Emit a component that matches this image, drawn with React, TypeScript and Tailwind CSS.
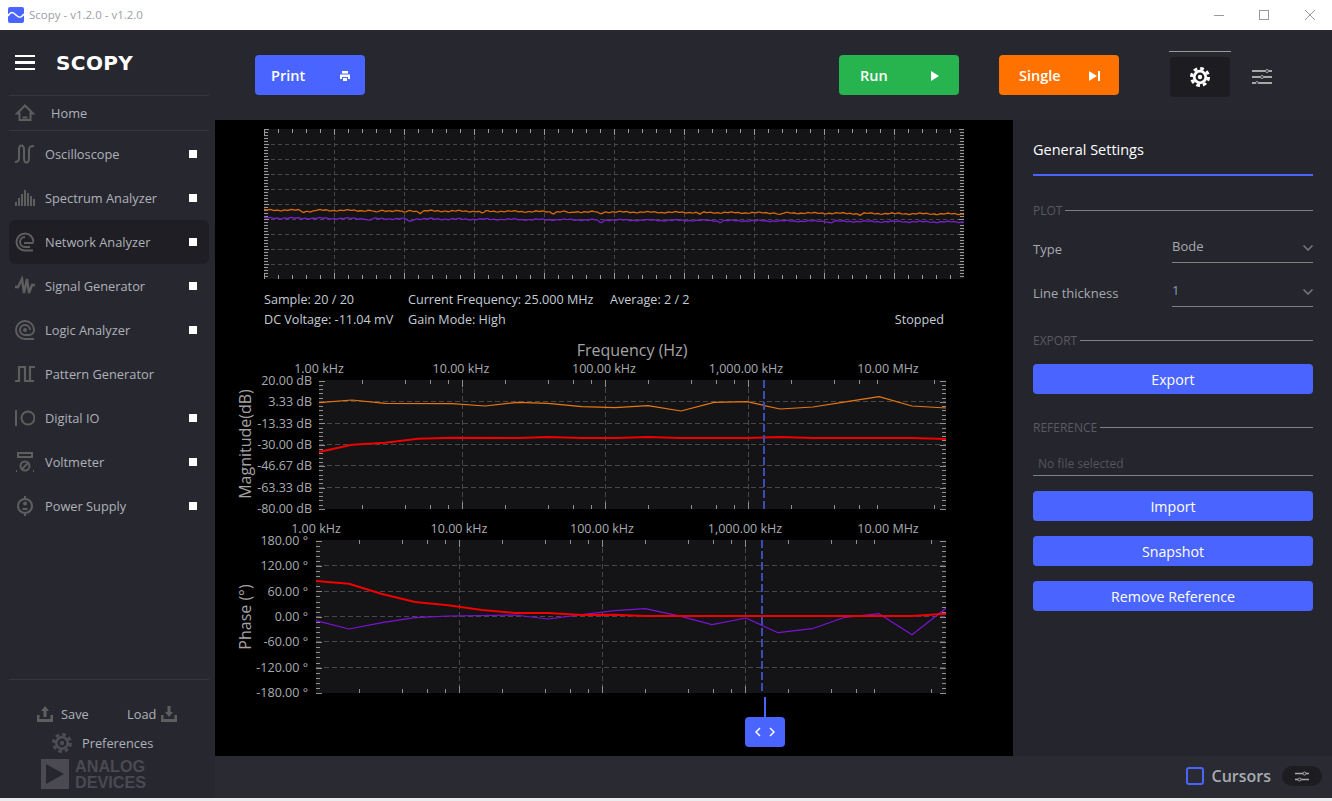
const navItems = [
  { name: "Oscilloscope", icon: "scope", dot: true },
  { name: "Spectrum Analyzer", icon: "spectrum", dot: true },
  { name: "Network Analyzer", icon: "network", dot: true, active: true },
  { name: "Signal Generator", icon: "signal", dot: true },
  { name: "Logic Analyzer", icon: "logic", dot: true },
  { name: "Pattern Generator", icon: "pattern", dot: false },
  { name: "Digital IO", icon: "io", dot: true },
  { name: "Voltmeter", icon: "volt", dot: true },
  { name: "Power Supply", icon: "power", dot: true },
];

function NavIcon({ name }: { name: string }) {
  const stroke = "#5e5e5e";
  return (
    <svg width="20" height="20" viewBox="0 0 20 20" fill="none" stroke={stroke} strokeWidth="2" className="shrink-0">
      {name === "scope" && <path d="M0 18C3 18 4 17 4 14V6C4 0 9 0 9 6V14C9 20 14 20 14 14V6C14 3 15 2 19 2" />}
      {name === "spectrum" &&
        [[1, 4], [4, 8], [7, 12], [10, 16], [13, 13], [16, 10], [19, 7]].map(([x, h]) => (
          <line key={x} x1={x} x2={x} y1={18} y2={18 - h} />
        ))}
      {name === "network" && (
        <>
          <path d="M18 18.5H10A8.5 8.5 0 1 1 18.5 10" />
          <path d="M18.5 11H9" />
          <path d="M15 15H10A5 5 0 0 1 10 5" />
        </>
      )}
      {name === "signal" && <path d="M0 11H3L7 3L9 17L12 3L14 17L17 9H20" strokeWidth="2.4" />}
      {name === "logic" && (
        <>
          <path d="M19 19H10A9 9 0 1 1 19 10A5 5 0 0 1 14 15H10A5 5 0 1 1 15 10" />
          <circle cx="10" cy="10" r="1" />
        </>
      )}
      {name === "pattern" && <path d="M0 17H4V3H10V17H15V3H20M15 17H19" strokeWidth="2.2" />}
      {name === "io" && (
        <>
          <line x1="1" x2="1" y1="2" y2="18" />
          <circle cx="13" cy="10" r="6.5" />
        </>
      )}
      {name === "volt" && (
        <>
          <rect x="3" y="1" width="14" height="4" />
          <circle cx="10" cy="14" r="4.5" />
          <path d="M7 17L13 11" />
          <path d="M1 19H2M18 19H19" />
        </>
      )}
      {name === "power" && (
        <>
          <circle cx="10" cy="10" r="7" />
          <path d="M10 0V3M10 17V20M7.5 13H12.5" />
          <circle cx="10" cy="7.5" r="1" fill={stroke} />
        </>
      )}
    </svg>
  );
}

function Gear({ size, color, hole }: { size: number; color: string; hole: string }) {
  return (
    <svg width={size} height={size} viewBox="0 0 20 20" className="shrink-0">
      <circle cx="10" cy="10" r="8.5" fill="none" stroke={color} strokeWidth="3" strokeDasharray="3.67 3" />
      <circle cx="10" cy="10" r="7.2" fill={color} />
      <circle cx="10" cy="10" r="4.4" fill={hole} />
      <circle cx="10" cy="10" r="2.2" fill={color} />
    </svg>
  );
}

function Sidebar() {
  return (
    <aside className="w-[215px] shrink-0 flex flex-col bg-[#272730]">
      <div className="h-[65px] flex items-start pt-[25px] pl-[15px]">
        <div className="w-[20px] flex flex-col gap-[4px]">
          <div className="h-[2px] bg-white" />
          <div className="h-[3px] bg-white" />
          <div className="h-[2px] bg-white" />
        </div>
        <span className="ml-[21px] -mt-[4px] text-[20px] leading-[24px] tracking-[0.4px] font-bold text-white font-['DejaVu_Sans',sans-serif]">
          SCOPY
        </span>
      </div>
      <div className="ml-[9px] mr-[6px] border-y border-[#36363f] h-[36px] flex items-center pl-[6px]">
        <svg width="20" height="18" viewBox="0 0 20 18" fill="none" stroke="#5e5e5e" strokeWidth="2" className="shrink-0">
          <path d="M10 1.5L18 9.5H15.5V16H4.5V9.5H2Z" />
          <path d="M7.5 13.5H12.5" />
        </svg>
        <span className="ml-[16px] pt-[2px] text-[12.8px] text-[#aeb2b8]">Home</span>
      </div>
      <nav className="mt-[1px] flex flex-col">
        {navItems.map((item) => (
          <div
            key={item.name}
            className={`ml-[9px] mr-[6px] h-[44px] flex items-center pl-[6px] pr-[12px] rounded-[6px] ${item.active ? "bg-[#1e1e24]" : ""}`}
          >
            <NavIcon name={item.icon} />
            <span className="ml-[10px] pt-[2px] flex-1 text-[12.8px] text-[#aeb2b8]">{item.name}</span>
            {item.dot && <div className="w-[8px] h-[8px] bg-white" />}
          </div>
        ))}
      </nav>
      <div className="mt-auto ml-[9px] mr-[6px] border-t border-[#36363f] h-px" />
      <div className="pt-[24px] pb-[9px]">
        <div className="h-[20px] flex items-center pl-[37px] text-[12.8px] text-[#aeb2b8]">
          <svg width="16" height="16" viewBox="0 0 16 16" fill="#5e5e5e" className="shrink-0">
            <path d="M0 9H2.5V13H13.5V9H16V16H0ZM8 0L12 5H9.5V11H6.5V5H4Z" />
          </svg>
          <span className="ml-[8px] w-[66px] pt-[2px]">Save</span>
          <span className="w-[34px] pt-[2px]">Load</span>
          <svg width="16" height="16" viewBox="0 0 16 16" fill="#5e5e5e" className="shrink-0">
            <path d="M0 9H2.5V13H13.5V9H16V16H0ZM6.5 0H9.5V6H12L8 11L4 6H6.5Z" />
          </svg>
        </div>
        <div className="mt-[9px] h-[20px] flex items-center pl-[52px]">
          <Gear size={20} color="#4c4c52" hole="#272730" />
          <span className="ml-[10px] pt-[2px] text-[12.8px] text-[#aeb2b8]">Preferences</span>
        </div>
        <div className="mt-[6px] h-[30px] flex items-center pl-[41px]">
          <svg width="28" height="30" viewBox="0 0 28 30" className="shrink-0">
            <rect width="28" height="30" fill="#4a4a50" />
            <path d="M5 5L23 15L5 25Z" fill="#272730" />
          </svg>
          <div className="ml-[6px] text-[#4a4a50] font-['Liberation_Sans',sans-serif] font-bold text-[16.2px] leading-[16px]">
            <div>ANALOG</div>
            <div>DEVICES</div>
          </div>
        </div>
      </div>
    </aside>
  );
}

function TopBar() {
  return (
    <header className="h-[90px] shrink-0 bg-[#272730] flex items-start pt-[25px] pl-[40px] text-white text-[14.5px] font-semibold">
      <button className="w-[110px] h-[40px] pt-[1px] rounded-[4px] bg-[#4a65ff] flex items-center justify-between pl-[16px] pr-[15px]">
        Print
        <svg width="10" height="10" viewBox="0 0 10 10" fill="white">
          <path d="M2 0H8V2.5H2ZM0 3.5H10V8H8V6H2V8H0ZM3 7H7V10H3Z" />
        </svg>
      </button>
      <button className="ml-[474px] w-[120px] h-[40px] pt-[1px] rounded-[4px] bg-[#27b34e] flex items-center justify-between pl-[21px] pr-[20px]">
        Run
        <svg width="8" height="10" viewBox="0 0 8 10" fill="white">
          <path d="M0 0L8 5L0 10Z" />
        </svg>
      </button>
      <button className="ml-[40px] w-[120px] h-[40px] pt-[1px] rounded-[4px] bg-[#ff7200] flex items-center justify-between pl-[20px] pr-[19px]">
        Single
        <svg width="11" height="10" viewBox="0 0 11 10" fill="white">
          <path d="M0 0L8 5L0 10ZM9 0H11V10H9Z" />
        </svg>
      </button>
      <div className="ml-[50px] -mt-[4px] w-[62px] border-t border-[#9a9a9a] pt-[5px]">
        <div className="mx-auto w-[60px] h-[40px] rounded-[4px] bg-[#1c1c21] flex items-center justify-center">
          <Gear size={20} color="#ffffff" hole="#1c1c21" />
        </div>
      </div>
      <div className="ml-[21px] mt-[14px]">
        <SlidersIcon color="#a8a8a8" width={20} />
      </div>
    </header>
  );
}

function SlidersIcon({ color, width }: { color: string; width: number }) {
  return (
    <svg width={width} height={width * 0.75} viewBox="0 0 20 15" stroke={color} strokeWidth="2" fill="#272730">
      <path d="M0 2H20M0 8H20M0 14H20" />
      <circle cx="15" cy="2" r="1.5" strokeWidth="1" />
      <circle cx="10" cy="8" r="1.5" strokeWidth="1" />
      <circle cx="5" cy="14" r="1.5" strokeWidth="1" />
    </svg>
  );
}

const pts = (list: number[][]) => list.map((p) => p.join(",")).join(" ");

// sweep trace of the small plot, built from a few fixed waves and dips
function sweep(base: number, drift: number, dips: number[][]) {
  const out: number[][] = [];
  for (let x = 264; x <= 964; x += 2) {
    let y = base + (drift * (x - 264)) / 700 + Math.sin(x * 0.9) * 0.45 + Math.sin(x * 0.23) * 0.45;
    for (const [dx, depth] of dips) {
      y += depth * Math.exp(-((x - dx) * (x - dx)) / 6);
    }
    out.push([x, +y.toFixed(2)]);
  }
  return pts(out);
}

function SweepPlot() {
  const hLines = [144, 159, 174, 189, 204, 219, 234, 249, 264];
  const vLines = [334, 404, 474, 544, 614, 684, 754, 824, 894];
  const xTicks = Array.from({ length: 51 }, (_, i) => 264 + i * 14);
  const yTicks = Array.from({ length: 51 }, (_, i) => 129 + i * 3);
  return (
    <svg width="700" height="150" viewBox="264 129 700 150" className="block">
      <rect x="264" y="129" width="700" height="150" fill="#141417" />
      {hLines.map((y) => (
        <line key={y} x1="264" x2="964" y1={y + 0.5} y2={y + 0.5} stroke="#484848" strokeDasharray="4 3" />
      ))}
      {vLines.map((x) => (
        <line key={x} x1={x + 0.5} x2={x + 0.5} y1="129" y2="279" stroke="#484848" strokeDasharray="4 3" />
      ))}
      {xTicks.map((x, i) => {
        const len = i % 5 === 0 ? 6 : 4;
        return (
          <g key={x} stroke="#9a9a9a">
            <line x1={x + 0.5} x2={x + 0.5} y1="129" y2={129 + len} />
            <line x1={x + 0.5} x2={x + 0.5} y1="279" y2={279 - len} />
          </g>
        );
      })}
      {yTicks.map((y, i) => {
        const len = i % 5 === 0 ? 5 : 4;
        return (
          <g key={y} stroke="#9a9a9a">
            <line x1="264" x2={264 + len} y1={y + 0.5} y2={y + 0.5} />
            <line x1="964" x2={964 - len} y1={y + 0.5} y2={y + 0.5} />
          </g>
        );
      })}
      <polyline
        points={sweep(210, 4, [[304, 2], [311, 1.5], [376, 2], [404, 2], [420, 2], [482, 2], [553, 1.5], [570, 1.5], [600, 2], [700, 1.5], [780, 2], [860, 1.5]])}
        fill="none"
        stroke="#d9680f"
        strokeWidth="1.3"
      />
      <polyline
        points={sweep(218, 4, [[369, 2], [410, 3], [600, 1.5], [601, 1.5], [720, 1.5], [830, 1.5]])}
        fill="none"
        stroke="#7a1fd0"
        strokeWidth="1.3"
      />
    </svg>
  );
}

type BodeProps = {
  top: number;
  x0: number;
  y0: number;
  y1: number;
  labelX: number;
  yLabels: [string, number][];
  xCenters: number[];
  yTitle: string;
  yTitleAt: number;
  cursorX: number;
  lines: { points: number[][]; color: string; width: number }[];
  height: number;
  showFreq?: boolean;
};

const xNames = ["1.00 kHz", "10.00 kHz", "100.00 kHz", "1,000.00 kHz", "10.00 MHz"];
const decade = 143;

function BodePlot({ top, x0, y0, y1, labelX, yLabels, xCenters, yTitle, yTitleAt, cursorX, lines, height, showFreq }: BodeProps) {
  const x1 = 946;
  const majors = [x0 + decade, x0 + decade * 2, x0 + decade * 3];
  const minors: number[] = [];
  for (let d = 0; d < 4; d++) {
    for (const m of [0.301, 0.602, 0.778, 0.903]) {
      minors.push(Math.round(x0 + decade * d + decade * m));
    }
  }
  minors.push(Math.round(x0 + decade * 4 + decade * 0.301));
  const step = (yLabels[yLabels.length - 1][1] - yLabels[0][1]) / 30;
  const yTicks = Array.from({ length: 31 }, (_, i) => y0 + 0.5 + i * step);
  return (
    <svg width="798" height={height} viewBox={`215 ${top} 798 ${height}`} className="block overflow-visible" fontSize="12.5">
      <rect x={x0} y={y0} width={x1 - x0} height={y1 - y0} fill="#141417" />
      {yLabels.slice(1, -1).map(([, y]) => (
        <line key={y} x1={x0} x2={x1} y1={y} y2={y} stroke="#484848" strokeDasharray="5 3" />
      ))}
      {majors.map((x) => (
        <line key={x} x1={x + 0.5} x2={x + 0.5} y1={y0} y2={y1} stroke="#484848" strokeDasharray="5 3" />
      ))}
      {majors.map((x) => (
        <g key={x} stroke="#8f8f8f">
          <line x1={x + 0.5} x2={x + 0.5} y1={y0} y2={y0 + 7} />
          <line x1={x + 0.5} x2={x + 0.5} y1={y1} y2={y1 - 7} />
        </g>
      ))}
      {minors.map((x) => (
        <g key={x} stroke="#8f8f8f">
          <line x1={x + 0.5} x2={x + 0.5} y1={y0} y2={y0 + 4} />
          <line x1={x + 0.5} x2={x + 0.5} y1={y1} y2={y1 - 4} />
        </g>
      ))}
      {yTicks.map((y, i) => {
        const len = i % 5 === 0 ? 6 : 4;
        return (
          <g key={i} stroke="#8f8f8f">
            <line x1={x0} x2={x0 + len} y1={Math.round(y) + 0.5} y2={Math.round(y) + 0.5} />
            <line x1={x1} x2={x1 - len} y1={Math.round(y) + 0.5} y2={Math.round(y) + 0.5} />
          </g>
        );
      })}
      {lines.map((l) => (
        <polyline key={l.color} points={pts(l.points)} fill="none" stroke={l.color} strokeWidth={l.width} strokeLinejoin="round" />
      ))}
      <line x1={cursorX} x2={cursorX} y1={y0} y2={y1} stroke="#3a4cb8" strokeWidth="2" strokeDasharray="8 3" />
      {showFreq && (
        <text x="632" y="356" textAnchor="middle" fontSize="16" fill="#a4a4a4">
          Frequency (Hz)
        </text>
      )}
      {xCenters.map((x, i) => (
        <text key={x} x={x} y={y0 - 7} textAnchor="middle" fill="#a8acb0">
          {xNames[i]}
        </text>
      ))}
      {yLabels.map(([label, y]) => (
        <text key={label} x={labelX} y={y + 4.5} textAnchor="end" fill="#a8acb0">
          {label}
        </text>
      ))}
      <text
        transform={`translate(251 ${yTitleAt}) rotate(-90)`}
        textAnchor="middle"
        fontSize="16"
        fill="#a4a4a4"
      >
        {yTitle}
      </text>
    </svg>
  );
}

const magOrange = [[319, 402.7], [352, 400], [385, 403.3], [452, 403.7], [485, 406], [518, 402.3], [548, 403.3], [582, 406.7], [615, 407.7], [648, 405.7], [681, 411], [714, 402.3], [747, 401.7], [780, 409], [813, 407], [847, 401.7], [879, 396.7], [912, 406], [946, 408]];
const magRed = [[319, 452], [352, 444.7], [385, 442.7], [418, 438.7], [452, 437.7], [518, 438], [548, 437], [582, 438], [615, 438], [648, 437], [681, 438], [747, 438], [780, 437], [813, 438], [912, 438], [946, 439]];
const phaseRed = [[316, 581], [349, 583.7], [382, 594], [415, 602], [448, 605.3], [482, 610], [515, 613], [548, 613], [582, 615], [615, 614.7], [645, 616], [745, 616], [912, 616], [946, 613.7]];
const phasePurple = [[316, 620.7], [349, 629], [382, 622.7], [415, 617.7], [448, 616], [515, 615], [548, 619], [582, 614.7], [615, 610.7], [645, 608.7], [678, 615.7], [712, 624.7], [746, 618], [778, 632.7], [812, 628.7], [845, 617.3], [879, 613.7], [912, 634.7], [946, 608.3]];

function PlotArea() {
  return (
    <main className="w-[798px] shrink-0 bg-black flex flex-col pt-[9px]">
      <div className="pl-[49px]">
        <SweepPlot />
      </div>
      <div className="mt-[11px] pl-[49px] pr-[69px] text-[12.6px] leading-[20px] text-[#c4ccd4]">
        <div className="flex">
          <span className="w-[144px]">Sample: 20 / 20</span>
          <span className="w-[202px]">Current Frequency: 25.000 MHz</span>
          <span>Average: 2 / 2</span>
        </div>
        <div className="flex">
          <span className="w-[144px]">DC Voltage: -11.04 mV</span>
          <span>Gain Mode: High</span>
          <span className="ml-auto">Stopped</span>
        </div>
      </div>
      <div className="mt-[10px]">
        <BodePlot
          top={340}
          height={180}
          x0={319}
          y0={380}
          y1={509}
          labelX={312}
          showFreq
          xCenters={[319, 461, 604, 746, 888]}
          yLabels={[["20.00 dB", 380], ["3.33 dB", 401.5], ["-13.33 dB", 423.5], ["-30.00 dB", 444.5], ["-46.67 dB", 465.5], ["-63.33 dB", 487.5], ["-80.00 dB", 508.5]]}
          yTitle="Magnitude(dB)"
          yTitleAt={444}
          cursorX={764}
          lines={[
            { points: magOrange, color: "#e8760e", width: 1.2 },
            { points: magRed, color: "#f00000", width: 2 },
          ]}
        />
        <BodePlot
          top={520}
          height={177}
          x0={316}
          y0={540}
          y1={693}
          labelX={308}
          xCenters={[316, 459, 602, 745, 888]}
          yLabels={[["180.00 °", 540], ["120.00 °", 565.5], ["60.00 °", 591.5], ["0.00 °", 616.5], ["-60.00 °", 641.5], ["-120.00 °", 667.5], ["-180.00 °", 692.5]]}
          yTitle="Phase (°)"
          yTitleAt={617}
          cursorX={762}
          lines={[
            { points: phasePurple, color: "#7d12d6", width: 1.2 },
            { points: phaseRed, color: "#f00000", width: 2 },
          ]}
        />
      </div>
      <div className="ml-[530px] w-[40px] flex flex-col items-center">
        <div className="w-[2px] h-[20px] bg-[#4a65ff]" />
        <div className="w-[40px] h-[30px] rounded-[4px] bg-[#4a65ff] flex items-center justify-center">
          <svg width="20" height="10" viewBox="0 0 20 10" fill="none" stroke="white" strokeWidth="1.5">
            <path d="M5 1L1 5L5 9M15 1L19 5L15 9" />
          </svg>
        </div>
      </div>
    </main>
  );
}

function SectionLabel({ label, className }: { label: string; className: string }) {
  return (
    <div className={`h-[16px] flex items-center text-[12px] text-[#5a5a62] ${className}`}>
      <span className="pt-[2px]">{label}</span>
      <div className="ml-[3px] mt-[1px] flex-1 h-px bg-[#808080]" />
    </div>
  );
}

function SelectRow({ label, value, className, valueClass }: { label: string; value: string; className: string; valueClass: string }) {
  return (
    <div className={`flex h-[30px] text-[13px] ${className}`}>
      <span className="w-[139px] pt-[6px] leading-[20px] text-[#a6aab0]">{label}</span>
      <div className="flex-1 border-b border-[#808080] flex justify-between">
        <span className={`pt-[3px] leading-[20px] ${valueClass}`}>{value}</span>
        <svg width="10" height="6" viewBox="0 0 10 6" fill="none" stroke="#77777c" strokeWidth="1.5" className="mt-[12px]">
          <path d="M0.5 0.5L5 5L9.5 0.5" />
        </svg>
      </div>
    </div>
  );
}

function BlueButton({ label, className }: { label: string; className: string }) {
  return (
    <button className={`block w-full h-[30px] pt-[2px] rounded-[4px] bg-[#4a65ff] text-white text-[14.2px] ${className}`}>{label}</button>
  );
}

function SettingsPanel() {
  return (
    <section className="w-[319px] shrink-0 bg-[#25252d] pl-[20px] pr-[19px]">
      <div className="h-[56px] border-b-2 border-[#4a65ff] flex items-center pt-[6px] text-[14.5px] text-white">General Settings</div>
      <SectionLabel label="PLOT" className="mt-[26px]" />
      <SelectRow label="Type" value="Bode" className="mt-[15px]" valueClass="text-[#a6aab0]" />
      <SelectRow label="Line thickness" value="1" className="mt-[14px]" valueClass="text-[#8a9ab0]" />
      <SectionLabel label="EXPORT" className="mt-[25px]" />
      <BlueButton label="Export" className="mt-[16px]" />
      <SectionLabel label="REFERENCE" className="mt-[25px]" />
      <div className="mt-[17px] h-[24px] border-b border-[#808080] pl-[5px] text-[12px] leading-[24px] text-[#55555c]">No file selected</div>
      <BlueButton label="Import" className="mt-[15px]" />
      <BlueButton label="Snapshot" className="mt-[15px]" />
      <BlueButton label="Remove Reference" className="mt-[15px]" />
    </section>
  );
}

function BottomBar() {
  return (
    <footer className="h-[42px] shrink-0 bg-[#2a2a32] flex items-center justify-end pr-[10px] pb-[2px]">
      <div className="w-[18px] h-[18px] border-2 border-[#4a65ff] rounded-[3px]" />
      <span className="ml-[8px] text-[16px] font-semibold text-[#a8acb0]">Cursors</span>
      <div className="ml-[11px] w-[40px] h-[20px] rounded-[10px] bg-[#1c1c21] flex items-center justify-center">
        <svg width="14" height="11" viewBox="0 0 14 11" fill="#1c1c21" stroke="#a8a8a8" strokeWidth="1.5">
          <path d="M0 2.5H14M0 8.5H14" />
          <circle cx="9.5" cy="2.5" r="1.5" strokeWidth="1" />
          <circle cx="4.5" cy="8.5" r="1.5" strokeWidth="1" />
        </svg>
      </div>
    </footer>
  );
}

function TitleBar() {
  return (
    <div className="h-[30px] shrink-0 bg-white flex items-center">
      <svg width="16" height="16" viewBox="0 0 16 16" className="ml-[8px] shrink-0">
        <rect width="16" height="16" rx="2" fill="#4a65ff" />
        <path d="M0 9C3 4 5 5 8 8C11 11 13 11 16 7" fill="none" stroke="white" strokeWidth="1.5" />
      </svg>
      <span className="ml-[5px] text-[11.5px] text-[#9a9ea4]">Scopy - v1.2.0 - v1.2.0</span>
      <div className="ml-auto flex items-center">
        <div className="w-[10px] h-px bg-[#9a9a9a] mr-[35px]" />
        <div className="w-[10px] h-[10px] border border-[#9a9a9a] mr-[36px]" />
        <svg width="10" height="10" viewBox="0 0 10 10" stroke="#9a9a9a" className="mr-[17px]">
          <path d="M0 0L10 10M10 0L0 10" />
        </svg>
      </div>
    </div>
  );
}

export default function App() {
  return (
    <div className="w-[1332px] h-[801px] flex flex-col overflow-hidden bg-[#ececec] font-['Open_Sans',sans-serif]">
      <TitleBar />
      <div className="h-[768px] flex shrink-0">
        <Sidebar />
        <div className="flex-1 flex flex-col">
          <TopBar />
          <div className="h-[636px] flex shrink-0">
            <PlotArea />
            <SettingsPanel />
          </div>
          <BottomBar />
        </div>
      </div>
    </div>
  );
}
